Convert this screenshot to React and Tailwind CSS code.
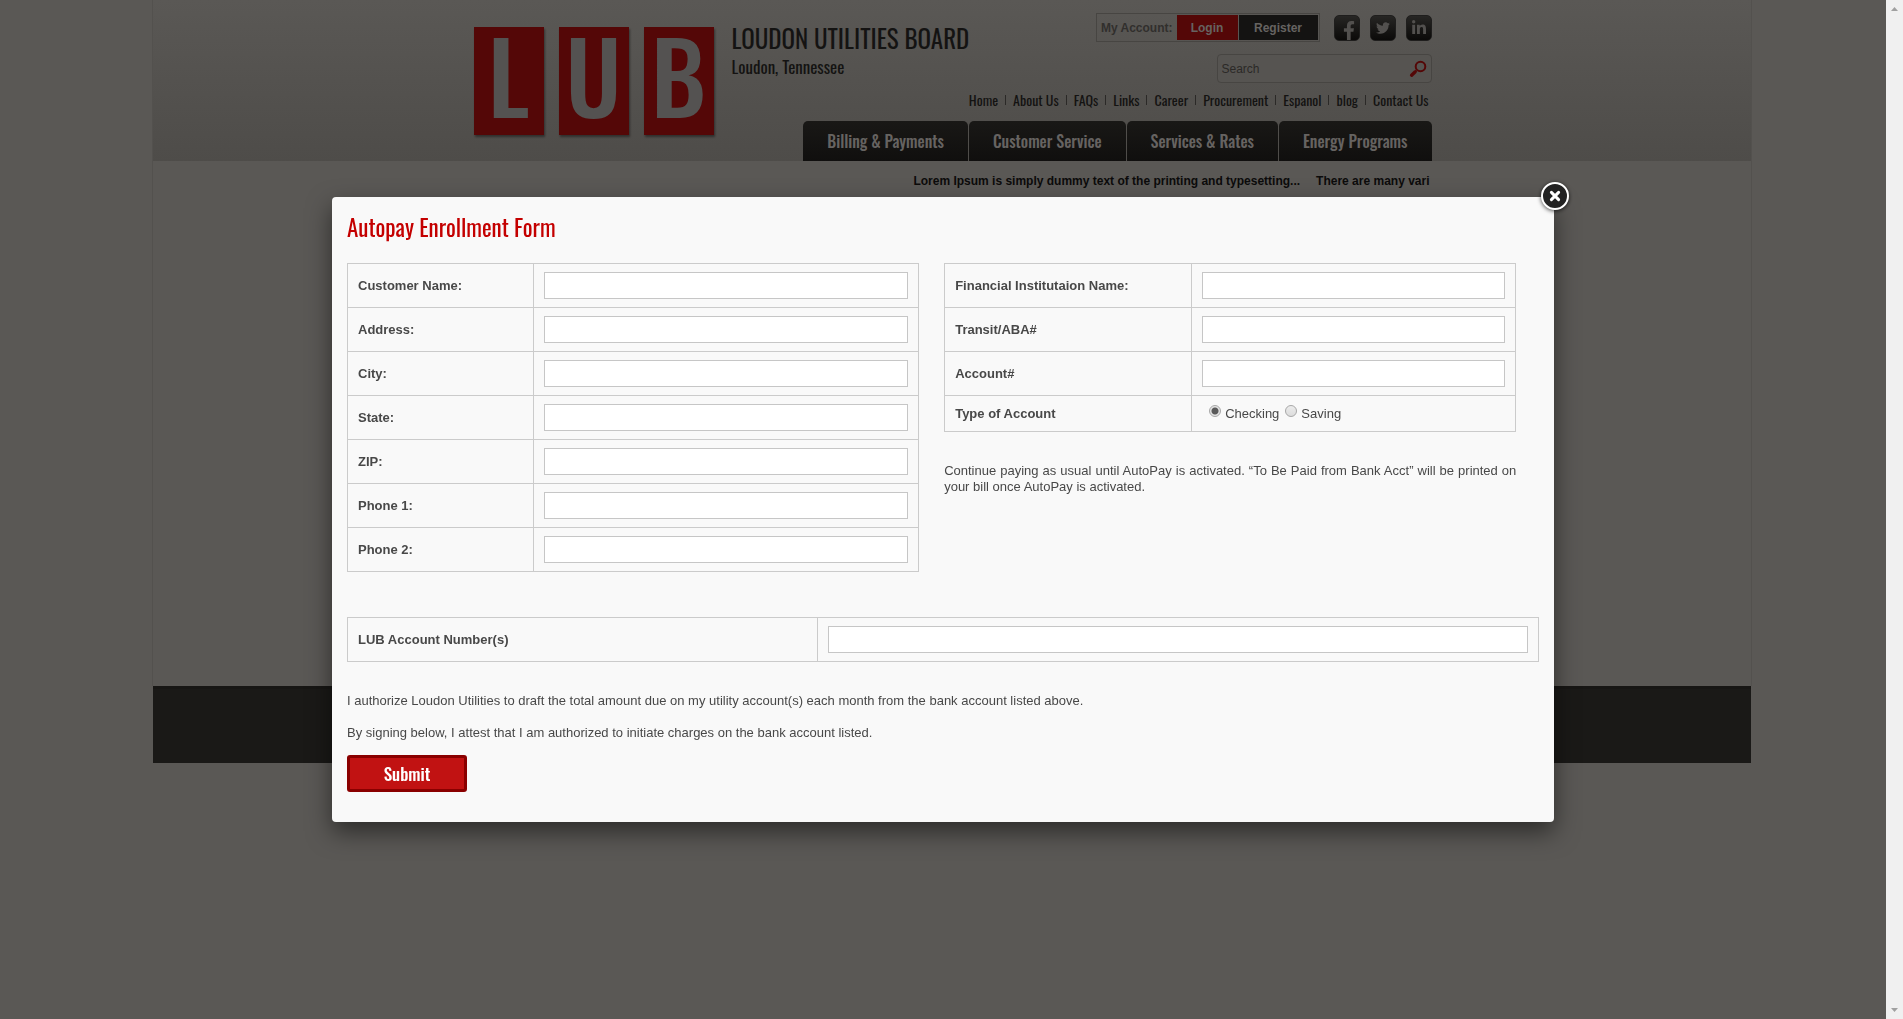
import { useState } from "react"
import { FaFacebookF, FaTwitter, FaLinkedinIn } from "react-icons/fa"

const topLinks = ["Home", "About Us", "FAQs", "Links", "Career", "Procurement", "Espanol", "blog", "Contact Us"]
const mainNav = ["Billing & Payments", "Customer Service", "Services & Rates", "Energy Programs"]
const news = ["Lorem Ipsum is simply dummy text of the printing and typesetting...", "There are many vari"]

const customerFields = [
  { id: "name", label: "Customer Name:" },
  { id: "address", label: "Address:" },
  { id: "city", label: "City:" },
  { id: "state", label: "State:" },
  { id: "zip", label: "ZIP:" },
  { id: "phone1", label: "Phone 1:" },
  { id: "phone2", label: "Phone 2:" },
]

const bankFields = [
  { id: "institution", label: "Financial Institutaion Name:" },
  { id: "transit", label: "Transit/ABA#" },
  { id: "account", label: "Account#" },
]

function Logo() {
  return (
    <a href="#" aria-label="LUB home" className="flex gap-[15px]">
      {["L", "U", "B"].map((letter) => (
        <span
          key={letter}
          className="h-[108px] w-[70px] bg-[#540707] text-center font-[Oswald] text-[99px] leading-[94px] font-medium text-[#545251] shadow-[1px_2px_2px_rgba(0,0,0,0.4)]"
        >
          {letter}
        </span>
      ))}
    </a>
  )
}

function SocialLink({ label, children }) {
  return (
    <a
      href="#"
      aria-label={label}
      className="flex h-[26px] w-[26px] items-center justify-center overflow-hidden rounded-[5px] border border-[#1f1e1d] bg-linear-to-b from-[#272624] to-[#0b0a09] text-[#52504e]"
    >
      {children}
    </a>
  )
}

function Header() {
  return (
    <header className="h-[161px] bg-linear-to-b from-[#5a5855] to-[#4e4c49]">
      <div className="mx-auto flex h-full max-w-[960px]">
        <div className="flex shrink-0 gap-[18px] pt-[27px] pl-[2px]">
          <Logo />
          <div className="font-[Oswald] whitespace-nowrap text-[#141312]">
            <h1 className="text-[25px] leading-[22px]">LOUDON UTILITIES BOARD</h1>
            <p className="mt-[6px] text-[17px] leading-6">Loudon, Tennessee</p>
          </div>
        </div>

        <div className="flex min-w-0 flex-1 flex-col items-end">
          {/* Account + social */}
          <div className="mt-[13px] flex w-max items-center gap-[14px]">
            <div className="flex h-[29px] items-center border border-[#474542] pr-px text-[12px] font-bold">
              <span className="px-1 text-[#312f2d]">My Account:</span>
              <button className="h-[25px] w-[61px] bg-[#540707] text-[#666361]">Login</button>
              <button className="ml-px h-[25px] w-[79px] bg-[#141312] text-[#666361]">Register</button>
            </div>
            <div className="flex gap-[10px]">
              <SocialLink label="Facebook">
                <FaFacebookF className="mt-[6px] ml-[5px] h-[19px] w-[14px]" />
              </SocialLink>
              <SocialLink label="Twitter">
                <FaTwitter className="h-[14px] w-[14px]" />
              </SocialLink>
              <SocialLink label="LinkedIn">
                <FaLinkedinIn className="h-4 w-4" />
              </SocialLink>
            </div>
          </div>

          {/* Search */}
          <form className="mt-3 flex h-[29px] w-[215px] items-center rounded-[4px] border border-[#474542] bg-[#565451]">
            <input
              type="text"
              aria-label="Search"
              placeholder="Search"
              className="h-full min-w-0 flex-1 pl-1 text-[12px] outline-none placeholder:text-[#2b2927]"
            />
            <button type="button" aria-label="Go" className="mr-1">
              <svg viewBox="0 0 18 18" className="h-[18px] w-[18px]" fill="none" stroke="#540707">
                <circle cx="11.5" cy="6.5" r="4.8" strokeWidth="2" />
                <path d="M7.5 10.5 6 12" strokeWidth="2" />
                <path d="M6 12 2.6 15.2" strokeWidth="3.4" strokeLinecap="round" />
              </svg>
            </button>
          </form>

          <nav className="mt-[5px] mr-[3px] flex w-max items-center font-[Oswald] text-[14px] leading-6 text-[#141312]">
            {topLinks.map((link, i) => (
              <span key={link} className="flex items-center">
                {i > 0 && <i className="mx-[7px] h-[10px] w-px bg-[#2b2927]" />}
                <a href="#">{link}</a>
              </span>
            ))}
          </nav>

          <nav className="mt-auto flex w-max gap-px">
            {mainNav.map((item) => (
              <a
                key={item}
                href="#"
                className="h-10 rounded-t-[5px] bg-linear-to-b from-[#191816] to-[#100f0e] px-6 font-[Oswald] text-[16px] leading-10 font-medium whitespace-nowrap text-[#666361]"
              >
                {item}
              </a>
            ))}
          </nav>
        </div>
      </div>
    </header>
  )
}

function FieldRow({ field, labelWidth }) {
  return (
    <tr>
      <th scope="row" className={`border border-[#cbcbcb] px-[10px] text-left font-bold ${labelWidth}`}>
        <label htmlFor={field.id}>{field.label}</label>
      </th>
      <td className="border border-[#cbcbcb] px-[10px] py-2">
        <input
          id={field.id}
          type="text"
          className="block h-[27px] w-full border border-[#c6c6c6] bg-white px-1 outline-none"
        />
      </td>
    </tr>
  )
}

function Radio({ value, selected, onSelect }) {
  return (
    <label className="flex items-center gap-1">
      <input
        type="radio"
        name="accountType"
        checked={selected === value}
        onChange={() => onSelect(value)}
        className="mb-[5px] h-3 w-3 appearance-none rounded-full border border-[#a8a8a8] bg-linear-to-b from-[#ececec] to-[#dcdcdc] checked:bg-[radial-gradient(circle,#5a5a5a_0_3px,#e4e4e4_4px)]"
      />
      {value}
    </label>
  )
}

function AutopayForm() {
  const [accountType, setAccountType] = useState("Checking")

  return (
    <form className="px-[15px] pt-[14px] pb-[30px] text-[13px] leading-4 text-[#484848]">
      <h2 className="mb-5 font-[Oswald] text-[23px] leading-8 text-[#c40000]">Autopay Enrollment Form</h2>

      <div className="flex items-start gap-[25px]">
        <table className="w-[48%] table-fixed border-collapse">
          <tbody>
            {customerFields.map((field) => (
              <FieldRow key={field.id} field={field} labelWidth="w-[186px]" />
            ))}
          </tbody>
        </table>

        <div className="w-[48%]">
          <table className="w-full table-fixed border-collapse">
            <tbody>
              {bankFields.map((field) => (
                <FieldRow key={field.id} field={field} labelWidth="w-[247px]" />
              ))}
              <tr className="h-9">
                <th scope="row" className="border border-[#cbcbcb] px-[10px] text-left font-bold">
                  Type of Account
                </th>
                <td className="border border-[#cbcbcb] px-[17px]">
                  <div className="flex gap-[6px]">
                    <Radio value="Checking" selected={accountType} onSelect={setAccountType} />
                    <Radio value="Saving" selected={accountType} onSelect={setAccountType} />
                  </div>
                </td>
              </tr>
            </tbody>
          </table>
          <p className="mt-[31px] text-justify">
            Continue paying as usual until AutoPay is activated. “To Be Paid from Bank Acct” will be printed on your
            bill once AutoPay is activated.
          </p>
        </div>
      </div>

      <table className="mt-[45px] w-full table-fixed border-collapse">
        <tbody>
          <FieldRow field={{ id: "lub", label: "LUB Account Number(s)" }} labelWidth="w-[470px]" />
        </tbody>
      </table>

      <p className="mt-[31px]">
        I authorize Loudon Utilities to draft the total amount due on my utility account(s) each month from the bank
        account listed above.
      </p>
      <p className="mt-4">By signing below, I attest that I am authorized to initiate charges on the bank account listed.</p>

      <button
        type="button"
        className="mt-[14px] block h-[37px] w-[120px] rounded-[3px] border-3 border-[#8a0000] bg-[#c11212] font-[Oswald] text-[17px] font-medium text-white"
      >
        Submit
      </button>
    </form>
  )
}

function App() {
  return (
    <div className="min-h-screen bg-[#5a5855] font-['Liberation_Sans',Arial,sans-serif]">
      <div className="mx-auto max-w-[1600px]">
        <div className="border-x border-[#53514e]">
          <Header />
          <main className="min-h-[525px]">
            <div className="mx-auto flex max-w-[960px] justify-end gap-4 pt-3 pr-[2px] text-[12px] leading-4 font-bold whitespace-nowrap text-[#0c0b0b]">
              {news.map((item) => (
                <span key={item}>{item}</span>
              ))}
            </div>
          </main>
        </div>
        <footer className="mx-px h-[77px] border-t-3 border-[#171614] bg-[#1a1917]" />
      </div>

      {/* Modal */}
      <div className="fixed inset-y-0 right-[17px] left-0 overflow-hidden">
        <div role="dialog" className="relative mx-auto mt-[197px] max-w-[1222px] rounded-[4px] bg-[#f9f9f9] shadow-[0_10px_25px_rgba(0,0,0,0.5)]">
          <button aria-label="Close" className="absolute -top-[17px] -right-[17px]">
            <svg viewBox="0 0 32 32" className="h-8 w-8 drop-shadow-[0_1px_2px_rgba(0,0,0,0.7)]">
              <circle cx="16" cy="16" r="13" fill="#222" stroke="#fff" strokeWidth="2" />
              <path d="M12.4 12.4 19.6 19.6M19.6 12.4 12.4 19.6" stroke="#fff" strokeWidth="3" strokeLinecap="round" />
            </svg>
          </button>
          <AutopayForm />
        </div>
      </div>

      {/* Scroll track */}
      <div aria-hidden="true" className="fixed inset-y-0 right-0 flex w-[17px] flex-col items-center justify-between bg-[#f0f0f0] py-[7px]">
        <svg viewBox="0 0 7 4" className="h-1 w-[7px]" fill="#a0a0a0">
          <path d="M3.5 0 7 4H0Z" />
        </svg>
        <svg viewBox="0 0 7 4" className="h-1 w-[7px]" fill="#a0a0a0">
          <path d="M0 0H7L3.5 4Z" />
        </svg>
      </div>
    </div>
  )
}

export default App
